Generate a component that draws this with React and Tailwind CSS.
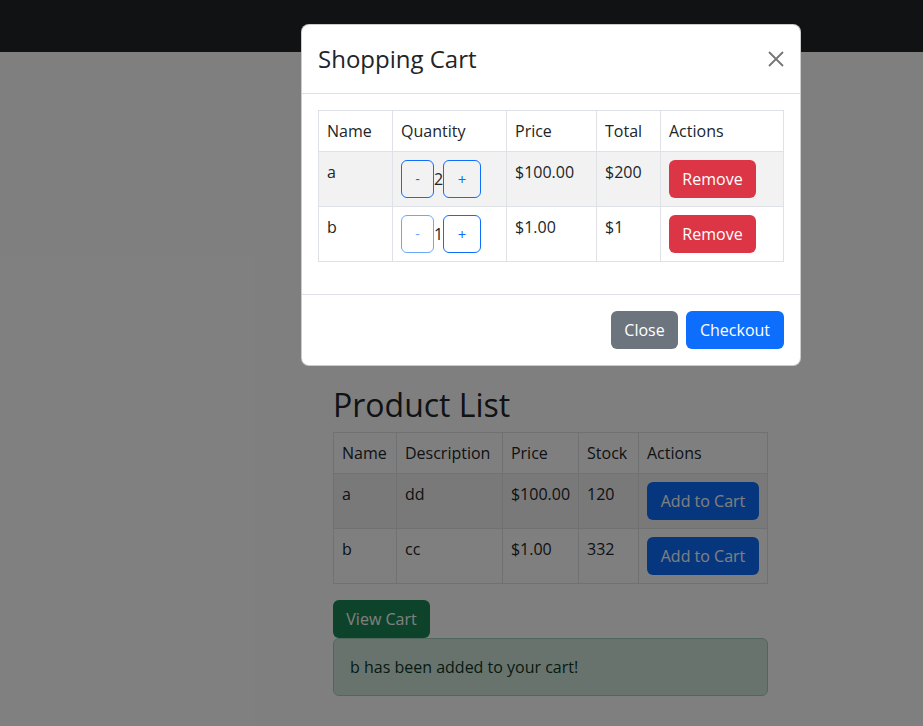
import React from 'react';

const font = { fontFamily: '"Open Sans", "Noto Sans CJK TC", sans-serif' };

const cart = [
    { name: 'a', qty: 2, price: '$100.00', total: '$200' },
    { name: 'b', qty: 1, price: '$1.00', total: '$1' },
];

const products = [
    { name: 'a', desc: 'dd', price: '$100.00', stock: 120 },
    { name: 'b', desc: 'cc', price: '$1.00', stock: 332 },
];

const CartModal = () => (
    <div className="absolute left-[301px] top-[24px] w-[500px] bg-white rounded-lg border border-black/20 text-[#212529]">
        <div className="flex items-center justify-between p-4 border-b border-[#dee2e6]">
            <h5 className="text-[24px] leading-[36px]">Shopping Cart</h5>
            <button className="w-4 h-4 flex items-center justify-center">
                <svg width="16" height="16" viewBox="0 0 16 16"><path d="M1 1l14 14M15 1L1 15" stroke="#757575" strokeWidth="1.8" /></svg>
            </button>
        </div>
        <div className="p-4">
            <table className="w-full border-collapse mb-4 text-[16px] leading-6">
                <thead>
                    <tr>
                        <th className="border border-[#dee2e6] p-2 text-left font-normal w-[74px]">Name</th>
                        <th className="border border-[#dee2e6] p-2 text-left font-normal w-[114px]">Quantity</th>
                        <th className="border border-[#dee2e6] p-2 text-left font-normal w-[90px]">Price</th>
                        <th className="border border-[#dee2e6] p-2 text-left font-normal w-[64px]">Total</th>
                        <th className="border border-[#dee2e6] p-2 text-left font-normal">Actions</th>
                    </tr>
                </thead>
                <tbody>
                    {cart.map((c, i) => (
                        <tr key={c.name} className={i === 0 ? 'bg-[#f2f2f2]' : ''}>
                            <td className="border border-[#dee2e6] p-2 align-top">{c.name}</td>
                            <td className="border border-[#dee2e6] p-2 align-top">
                                <div className="flex items-center">
                                    <button className={`w-[33px] h-[38px] border border-[#0d6efd] text-[#0d6efd] rounded-md text-[14px] ${c.qty === 1 ? 'opacity-60' : ''}`}>-</button>
                                    <span>{c.qty}</span>
                                    <button className="w-[38px] h-[38px] border border-[#0d6efd] text-[#0d6efd] rounded-md text-[15px]">+</button>
                                </div>
                            </td>
                            <td className="border border-[#dee2e6] p-2 align-top">{c.price}</td>
                            <td className="border border-[#dee2e6] p-2 align-top">{c.total}</td>
                            <td className="border border-[#dee2e6] p-2 align-top">
                                <button className="bg-[#dc3545] text-white rounded-md px-3 h-[38px] w-[87px]">Remove</button>
                            </td>
                        </tr>
                    ))}
                </tbody>
            </table>
        </div>
        <div className="flex justify-end gap-2 px-4 py-4 border-t border-[#dee2e6]">
            <button className="bg-[#6c757d] text-white rounded-md h-[38px] w-[67px]">Close</button>
            <button className="bg-[#0d6efd] text-white rounded-md h-[38px] w-[98px]">Checkout</button>
        </div>
    </div>
);

export default function App() {
    return (
        <div className="relative min-h-[726px] bg-white text-[#212529] text-[16px] leading-6" style={font}>
            <nav className="h-[52px] bg-[#212529]"></nav>
            <div className="pl-[333px] pr-[155px] pt-[334px]">
                <h2 className="text-[32px] leading-[38px] mb-2">Product List</h2>
                <table className="w-[435px] border-collapse mb-4">
                    <thead>
                        <tr>
                            <th className="border border-[#dee2e6] p-2 text-left font-normal w-[63px]">Name</th>
                            <th className="border border-[#dee2e6] p-2 text-left font-normal w-[106px]">Description</th>
                            <th className="border border-[#dee2e6] p-2 text-left font-normal w-[76px]">Price</th>
                            <th className="border border-[#dee2e6] p-2 text-left font-normal w-[60px]">Stock</th>
                            <th className="border border-[#dee2e6] p-2 text-left font-normal">Actions</th>
                        </tr>
                    </thead>
                    <tbody>
                        {products.map((p, i) => (
                            <tr key={p.name} className={i === 0 ? 'bg-[#f2f2f2]' : ''}>
                                <td className="border border-[#dee2e6] p-2 align-top">{p.name}</td>
                                <td className="border border-[#dee2e6] p-2 align-top">{p.desc}</td>
                                <td className="border border-[#dee2e6] p-2 align-top">{p.price}</td>
                                <td className="border border-[#dee2e6] p-2 align-top">{p.stock}</td>
                                <td className="border border-[#dee2e6] p-2 align-top">
                                    <button className="bg-[#0d6efd] text-white rounded-md h-[38px] w-[112px]">Add to Cart</button>
                                </td>
                            </tr>
                        ))}
                    </tbody>
                </table>
                <button className="bg-[#198754] text-white rounded-md h-[38px] w-[97px] block">View Cart</button>
                <div className="w-[435px] border border-[#a3cfbb] bg-[#d1e7dd] text-[#0a3622] rounded-md px-4 py-4 mb-4">b has been added to your cart!</div>
            </div>
            <div className="absolute inset-0 bg-black/50"></div>
            <CartModal />
        </div>
    );
}
